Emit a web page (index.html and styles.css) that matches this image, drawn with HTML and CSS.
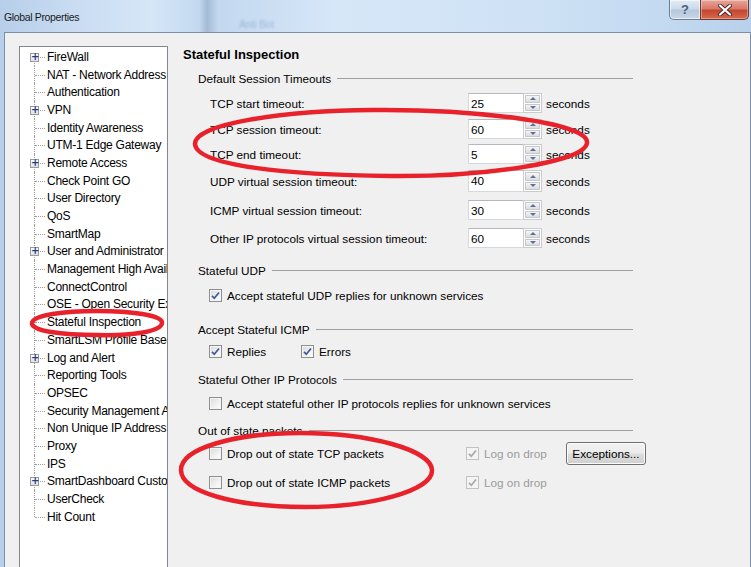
FILE: index.html
```html
<!DOCTYPE html>
<html>
<head>
<meta charset="utf-8">
<link rel="stylesheet" href="styles.css">
</head>
<body>
<div class="window">
  <div class="titlebar">
    <span class="title">Global Properties</span>
    <span class="ghost">Anti Bot</span>
    <div class="caption-btns">
      <span class="btn-help">?</span>
      <span class="btn-close"><svg width="16" height="12" viewBox="0 0 16 12"><path d="M3 1.5 L13 10.5 M13 1.5 L3 10.5" stroke="#4a2a2a" stroke-width="4" stroke-linecap="round"/><path d="M3 1.5 L13 10.5 M13 1.5 L3 10.5" stroke="#ffffff" stroke-width="2.2" stroke-linecap="round"/></svg></span>
    </div>
  </div>
  <div class="client">
    <div class="tree">
      <div class="row"><span class="gut"><span class="exp">+</span></span><span class="lbl">FireWall</span></div>
      <div class="row"><span class="gut"></span><span class="lbl">NAT - Network Address Translation</span></div>
      <div class="row"><span class="gut"></span><span class="lbl">Authentication</span></div>
      <div class="row"><span class="gut"><span class="exp">+</span></span><span class="lbl">VPN</span></div>
      <div class="row"><span class="gut"></span><span class="lbl">Identity Awareness</span></div>
      <div class="row"><span class="gut"></span><span class="lbl">UTM-1 Edge Gateway</span></div>
      <div class="row"><span class="gut"><span class="exp">+</span></span><span class="lbl">Remote Access</span></div>
      <div class="row"><span class="gut"></span><span class="lbl">Check Point GO</span></div>
      <div class="row"><span class="gut"></span><span class="lbl">User Directory</span></div>
      <div class="row"><span class="gut"></span><span class="lbl">QoS</span></div>
      <div class="row"><span class="gut"></span><span class="lbl">SmartMap</span></div>
      <div class="row"><span class="gut"><span class="exp">+</span></span><span class="lbl">User and Administrator Expiration</span></div>
      <div class="row"><span class="gut"></span><span class="lbl">Management High Availability</span></div>
      <div class="row"><span class="gut"></span><span class="lbl">ConnectControl</span></div>
      <div class="row"><span class="gut"></span><span class="lbl">OSE - Open Security Extension</span></div>
      <div class="row"><span class="gut"></span><span class="lbl">Stateful Inspection</span></div>
      <div class="row"><span class="gut"></span><span class="lbl">SmartLSM Profile Based Management</span></div>
      <div class="row"><span class="gut"><span class="exp">+</span></span><span class="lbl">Log and Alert</span></div>
      <div class="row"><span class="gut"></span><span class="lbl">Reporting Tools</span></div>
      <div class="row"><span class="gut"></span><span class="lbl">OPSEC</span></div>
      <div class="row"><span class="gut"></span><span class="lbl">Security Management Access</span></div>
      <div class="row"><span class="gut"></span><span class="lbl">Non Unique IP Address Ranges</span></div>
      <div class="row"><span class="gut"></span><span class="lbl">Proxy</span></div>
      <div class="row"><span class="gut"></span><span class="lbl">IPS</span></div>
      <div class="row"><span class="gut"><span class="exp">+</span></span><span class="lbl">SmartDashboard Customization</span></div>
      <div class="row"><span class="gut"></span><span class="lbl">UserCheck</span></div>
      <div class="row last"><span class="gut"></span><span class="lbl">Hit Count</span></div>
    </div>
    <div class="content">
      <div class="page-title">Stateful Inspection</div>

      <div class="group">
        <div class="gh g1">Default Session Timeouts</div>
        <div class="trow t1"><span class="tl">TCP start timeout:</span><span class="num">25</span><span class="spin"><span class="up"></span><span class="dn"></span></span><span class="unit">seconds</span></div>
        <div class="trow t2"><span class="tl">TCP session timeout:</span><span class="num">60</span><span class="spin"><span class="up"></span><span class="dn"></span></span><span class="unit">seconds</span></div>
        <div class="trow t3"><span class="tl">TCP end timeout:</span><span class="num">5</span><span class="spin"><span class="up"></span><span class="dn"></span></span><span class="unit">seconds</span></div>
        <div class="trow t4"><span class="tl">UDP virtual session timeout:</span><span class="num">40</span><span class="spin"><span class="up"></span><span class="dn"></span></span><span class="unit">seconds</span></div>
        <div class="trow t5"><span class="tl">ICMP virtual session timeout:</span><span class="num">30</span><span class="spin"><span class="up"></span><span class="dn"></span></span><span class="unit">seconds</span></div>
        <div class="trow t6"><span class="tl">Other IP protocols virtual session timeout:</span><span class="num">60</span><span class="spin"><span class="up"></span><span class="dn"></span></span><span class="unit">seconds</span></div>
      </div>

      <div class="group">
        <div class="gh g2">Stateful UDP</div>
        <div class="crow c1"><span class="chk on"><span class="box"><svg viewBox="0 0 11 11"><path d="M2 5.8 L4.3 8.3 L9 2.5"/></svg></span>Accept stateful UDP replies for unknown services</span></div>
      </div>

      <div class="group">
        <div class="gh g3">Accept Stateful ICMP</div>
        <div class="crow c2"><span class="chk on w92"><span class="box"><svg viewBox="0 0 11 11"><path d="M2 5.8 L4.3 8.3 L9 2.5"/></svg></span>Replies</span><span class="chk on"><span class="box"><svg viewBox="0 0 11 11"><path d="M2 5.8 L4.3 8.3 L9 2.5"/></svg></span>Errors</span></div>
      </div>

      <div class="group">
        <div class="gh g4">Stateful Other IP Protocols</div>
        <div class="crow c3"><span class="chk"><span class="box"></span>Accept stateful other IP protocols replies for unknown services</span></div>
      </div>

      <div class="group">
        <div class="gh g5">Out of state packets</div>
        <div class="crow c4"><span class="chk w257"><span class="box"></span>Drop out of state TCP packets</span><span class="chk dis w100"><span class="box"><svg viewBox="0 0 11 11"><path d="M2 5.8 L4.3 8.3 L9 2.5"/></svg></span>Log on drop</span><span class="button">Exceptions...</span></div>
        <div class="crow c5"><span class="chk w257"><span class="box"></span>Drop out of state ICMP packets</span><span class="chk dis w100"><span class="box"><svg viewBox="0 0 11 11"><path d="M2 5.8 L4.3 8.3 L9 2.5"/></svg></span>Log on drop</span></div>
      </div>
    </div>
  </div>
  <svg class="marks" width="751" height="567" viewBox="0 0 751 567">
    <path d="M372 110 C470 109 590 122 587 143 C584 163 480 177 390 176 C290 175 196 166 195 144 C194 124 280 111 372 110 Z"/>
    <path d="M97 311 C130 311 163 315 162 323 C161 332 130 336 97 335 C62 335 31 331 32 323 C33 315 64 311 97 311 Z"/>
    <path d="M300 433 C370 433 431 450 432 470 C433 491 370 507 305 507 C236 507 181 492 181 470 C181 448 236 433 300 433 Z"/>
  </svg>
</div>
</body>
</html>
```

FILE: styles.css
```css
html, body {
  margin: 0;
  padding: 0;
}
body {
  width: 751px;
  height: 567px;
  overflow: hidden;
  font-family: "Liberation Sans", Arial, sans-serif;
  font-size: 12px;
  color: #000;
}
.window {
  position: relative;
  width: 751px;
  height: 567px;
  overflow: hidden;
  display: flex;
  flex-direction: column;
  background: linear-gradient(to right, #b7cfea 0, #c9dcf2 10%, #d5e6f7 20%, #c4d9f0 26.5%, #a3bbd4 27.6%, #c3d8ef 29%, #d6e7f8 45%, #cfe2f5 70%, #c4daf1 88%, #b8d0eb 100%);
}
.titlebar {
  height: 32px;
  flex: 0 0 32px;
  display: flex;
  align-items: flex-start;
  padding-right: 2px;
  box-sizing: border-box;
}
.title {
  margin: 9px 0 0 4px;
  font-size: 10.5px;
  letter-spacing: -0.35px;
  color: #1b1b1b;
  line-height: 16px;
}
.ghost {
  margin: 19px 0 0 160px;
  font-size: 10px;
  color: #7f9fc6;
  filter: blur(1.2px);
  opacity: 0.6;
}
.caption-btns {
  margin-left: auto;
  display: flex;
  height: 21px;
}
.btn-help {
  width: 31px;
  height: 20px;
  box-sizing: border-box;
  border: 1px solid #6e7f95;
  border-top: none;
  border-right: none;
  border-bottom-left-radius: 5px;
  background: linear-gradient(#e3ecf6 0, #cbd9ea 48%, #b5c7dd 52%, #c9d7e8 100%);
  color: #4d5e74;
  font-size: 13px;
  font-weight: bold;
  text-align: center;
  line-height: 19px;
  box-shadow: inset 0 0 0 1px rgba(255,255,255,0.6);
}
.btn-close {
  width: 49px;
  height: 20px;
  box-sizing: border-box;
  border: 1px solid #6b3a33;
  border-top: none;
  border-bottom-right-radius: 5px;
  background: linear-gradient(#e7a799 0, #d9796a 45%, #c54630 55%, #d66a4e 100%);
  display: flex;
  align-items: center;
  justify-content: center;
  box-shadow: inset 0 0 0 1px rgba(255,255,255,0.35);
}
.client {
  flex: 1 1 auto;
  margin-left: 4px;
  border: 1px solid #7b8ea6;
  border-bottom: none;
  background: #f0f0f0;
  display: flex;
  align-items: flex-start;
  padding: 13px 0 0 14px;
  overflow: hidden;
}
.tree {
  width: 147px;
  flex: 0 0 147px;
  height: 560px;
  background: #fff;
  border: 1px solid #82878f;
  padding-top: 1px;
  box-sizing: content-box;
  overflow: hidden;
}
.row {
  display: flex;
  align-items: center;
  height: 17.7px;
  white-space: nowrap;
}
.gut {
  position: relative;
  flex: 0 0 27px;
  width: 27px;
  height: 100%;
}
.gut::before {
  content: "";
  position: absolute;
  left: 14px;
  top: 0;
  bottom: 0;
  border-left: 1px dotted #a0a0a0;
}
.row:first-child .gut::before {
  top: 50%;
}
.row.last .gut::before {
  bottom: 50%;
}
.gut::after {
  content: "";
  position: absolute;
  left: 15px;
  width: 10px;
  top: 50%;
  border-top: 1px dotted #a0a0a0;
}
.exp {
  position: absolute;
  left: 10px;
  top: 50%;
  margin-top: -4px;
  width: 9px;
  height: 9px;
  box-sizing: border-box;
  border: 1px solid #9a9a9a;
  background: linear-gradient(#ffffff, #e2e2e2);
  z-index: 1;
  font-size: 10px;
  line-height: 6px;
  text-align: center;
  color: #1f3d8a;
  font-weight: bold;
  font-family: "DejaVu Sans", sans-serif;
}
.lbl {
  font-size: 12px;
  letter-spacing: -0.25px;
}
.content {
  flex: 1 1 auto;
  padding: 0 0 0 15px;
  font-size: 11.75px;
}
.page-title {
  font-weight: bold;
  font-size: 13px;
  line-height: 16px;
  height: 16px;
  margin-top: 1px;
}
.group {
  width: 435px;
  margin-left: 15px;
}
.gh {
  display: flex;
  align-items: center;
  height: 16px;
  white-space: nowrap;
}
.gh::after {
  content: "";
  flex: 1 1 auto;
  border-top: 1px solid #a0a0a0;
  margin-left: 6px;
}
.g1 { margin-top: 7px; }
.g2 { margin-top: 14px; }
.g3 { margin-top: 18px; }
.g4 { margin-top: 12px; }
.g5 { margin-top: 11px; }
.trow {
  display: flex;
  align-items: center;
  height: 20px;
  padding-left: 12px;
}
.t1 { margin-top: 7px; }
.t2 { margin-top: 6px; }
.t3 { margin-top: 5px; }
.t4 { margin-top: 6px; height: 22px; }
.t5 { margin-top: 8px; }
.t6 { margin-top: 8px; }
.tl {
  width: 258px;
  flex: 0 0 258px;
}
.num {
  width: 55px;
  height: 20px;
  box-sizing: border-box;
  border: 1px solid #d5d9de;
  border-top-color: #b4b8be;
  border-right: none;
  background: #fff;
  padding: 2px 0 0 2px;
  line-height: 16px;
}
.trow.t4 .num, .trow.t4 .spin { height: 22px; }
.spin {
  width: 19px;
  height: 20px;
  box-sizing: border-box;
  border: 1px solid #c9cbce;
  background: #fff;
  display: flex;
  flex-direction: column;
  padding: 1px;
  gap: 1px;
}
.up, .dn {
  flex: 1 1 0;
  border: 1px solid #c5c8cc;
  background: linear-gradient(#f6f6f6, #dcdcdc);
  display: flex;
  align-items: center;
  justify-content: center;
}
.up::before {
  content: "";
  border-left: 3px solid transparent;
  border-right: 3px solid transparent;
  border-bottom: 3px solid #5c6fa0;
}
.dn::before {
  content: "";
  border-left: 3px solid transparent;
  border-right: 3px solid transparent;
  border-top: 3px solid #5c6fa0;
}
.unit {
  margin-left: 4px;
}
.crow {
  display: flex;
  align-items: center;
  height: 16px;
  padding-left: 11px;
}
.c1 { margin-top: 9px; }
.c2 { margin-top: 6px; }
.c3 { margin-top: 8px; }
.c4 { margin-top: 4px; height: 23px; }
.c5 { margin-top: 9px; }
.chk {
  display: flex;
  align-items: center;
  white-space: nowrap;
  flex-shrink: 0;
}
.w92 { width: 92px; flex: 0 0 92px; }
.w257 { width: 257px; flex: 0 0 257px; }
.w100 { width: 100px; flex: 0 0 100px; }
.box {
  width: 13px;
  height: 13px;
  box-sizing: border-box;
  border: 1px solid #8e8f8f;
  background: linear-gradient(135deg, #d9d9d9 0, #f2f2f2 60%, #ffffff 100%);
  box-shadow: inset 0 0 0 1px #f4f4f4;
  margin-right: 5px;
  display: flex;
  align-items: center;
  justify-content: center;
  flex-shrink: 0;
}
.box svg {
  width: 11px;
  height: 11px;
}
.box svg path {
  fill: none;
  stroke: #3d5996;
  stroke-width: 1.7;
}
.chk.dis {
  color: #9b9b9b;
}
.chk.dis .box {
  border-color: #c2c2c2;
  background: #f4f4f4;
}
.chk.dis .box svg path {
  stroke: #a8a8a8;
}
.button {
  flex: 0 0 80px;
  width: 80px;
  height: 23px;
  box-sizing: border-box;
  border: 1px solid #707070;
  border-radius: 3px;
  background: linear-gradient(#f2f2f2 0, #ebebeb 48%, #dddddd 52%, #cfcfcf 100%);
  box-shadow: inset 0 0 0 1px #fbfbfb;
  display: flex;
  align-items: center;
  justify-content: center;
}
.marks {
  position: absolute;
  left: 0;
  top: 0;
  pointer-events: none;
}
.marks path {
  fill: none;
  stroke: #e8212b;
  stroke-width: 4.5;
}
```
